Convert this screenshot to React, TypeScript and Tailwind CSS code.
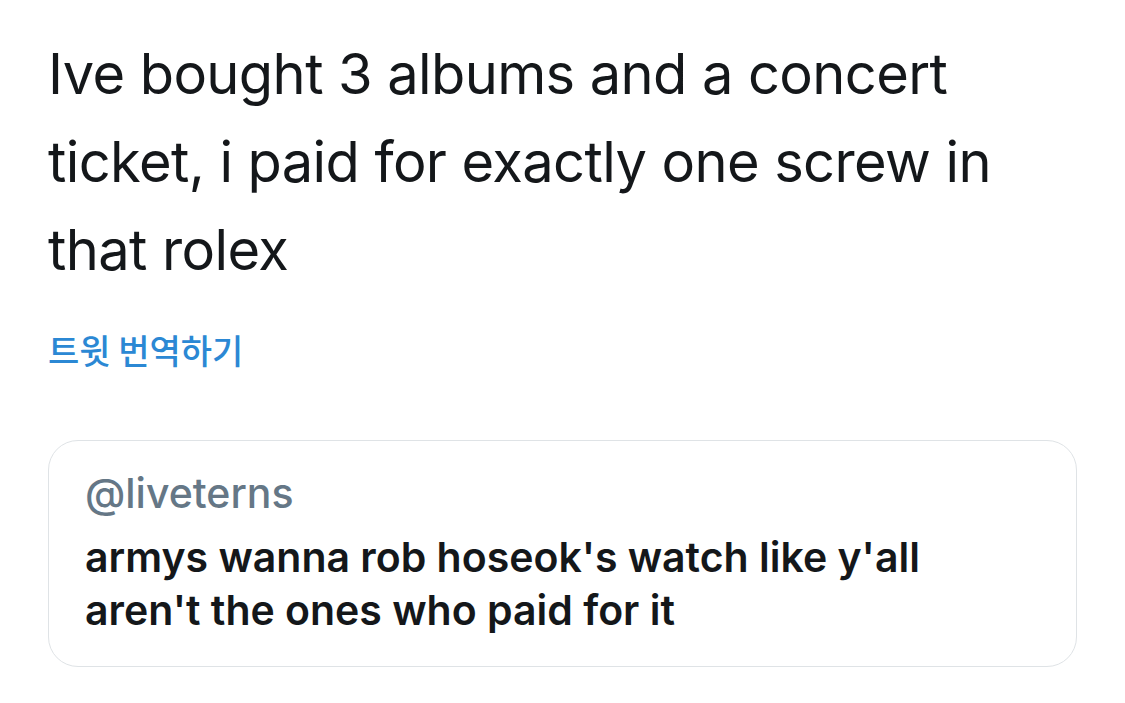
import React from 'react';

const App: React.FC = () => {
  return (
    <div className="min-h-screen w-[1125px] bg-white" style={{ fontFamily: 'Inter, "Noto Sans CJK KR", sans-serif' }}>
      <div className="px-[48px] pt-[30px]">
        {/* Tweet text */}
        <p className="text-[56px] leading-[88px] tracking-[-0.6px] text-[#14171a]">
          Ive bought 3 albums and a concert ticket, i paid for exactly one screw in that rolex
        </p>

        {/* Translate link */}
        <p className="mt-[36px] text-[34px] font-medium leading-[40px] text-[#2b88d4]" style={{ fontFamily: '"Noto Sans CJK KR", sans-serif' }}>
          트윗 번역하기
        </p>

        {/* Quoted tweet */}
        <div className="mt-[70px] h-[227px] rounded-[30px] border border-[#dfe3e6] px-[36px] pt-[28px]">
          <div className="text-[41px] font-medium leading-[48px] text-[#657786]">@liveterns</div>
          <div className="mt-[14px] max-w-[880px] text-[41px] font-semibold leading-[53px] text-[#14171a]">
            armys wanna rob hoseok's watch like y'all aren't the ones who paid for it
          </div>
        </div>
      </div>
    </div>
  );
};

export default App;
